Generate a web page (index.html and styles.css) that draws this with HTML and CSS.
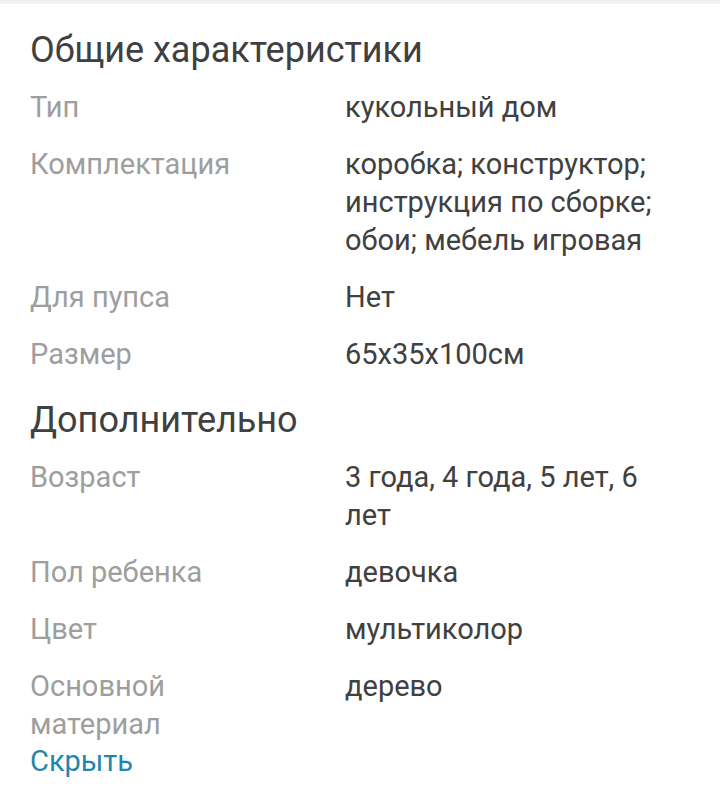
FILE: index.html
```html
<!DOCTYPE html>
<html lang="ru">
<head>
<meta charset="utf-8">
<link rel="stylesheet" href="styles.css">
</head>
<body>
<div class="topband"></div>
<main class="specs">
  <section class="group">
    <h2 class="group-title">Общие характеристики</h2>
    <div class="rows">
      <div class="row"><div class="label">Тип</div><div class="value">кукольный дом</div></div>
      <div class="row"><div class="label">Комплектация</div><div class="value">коробка; конструктор; инструкция по сборке; обои; мебель игровая</div></div>
      <div class="row"><div class="label">Для пупса</div><div class="value">Нет</div></div>
      <div class="row"><div class="label">Размер</div><div class="value">65x35x100см</div></div>
    </div>
  </section>
  <section class="group group-second">
    <h2 class="group-title">Дополнительно</h2>
    <div class="rows">
      <div class="row"><div class="label">Возраст</div><div class="value">3 года, 4 года, 5 лет, 6 лет</div></div>
      <div class="row"><div class="label">Пол ребенка</div><div class="value">девочка</div></div>
      <div class="row"><div class="label">Цвет</div><div class="value">мультиколор</div></div>
      <div class="row"><div class="label">Основной материал</div><div class="value">дерево</div></div>
    </div>
  </section>
  <a class="toggle" href="#">Скрыть</a>
</main>
</body>
</html>
```

FILE: styles.css
```css
* { box-sizing: border-box; }
html, body {
  margin: 0;
  padding: 0;
  background: #ffffff;
}
body {
  font-family: Roboto, "Noto Sans", Arial, sans-serif;
  color: #404040;
}
.topband {
  height: 4px;
  background: linear-gradient(#ececec, #f4f4f4);
}
.specs {
  padding: 24px 30px 0 30px;
  display: flex;
  flex-direction: column;
}
.group-title {
  margin: 0;
  font-size: 36px;
  line-height: 44px;
  font-weight: 400;
  color: #404040;
}
.group-second {
  margin-top: 25px;
}
.rows {
  margin-top: 16px;
  display: flex;
  flex-direction: column;
  gap: 19px;
}
.row {
  display: grid;
  grid-template-columns: 315px 1fr;
  font-size: 29px;
  line-height: 38px;
}
.label {
  color: #9e9e9e;
  padding-right: 120px;
}
.value {
  color: #404040;
  padding-right: 10px;
}
.toggle {
  font-size: 29px;
  line-height: 36px;
  color: #1f86ad;
  text-decoration: none;
  align-self: flex-start;
}
```
